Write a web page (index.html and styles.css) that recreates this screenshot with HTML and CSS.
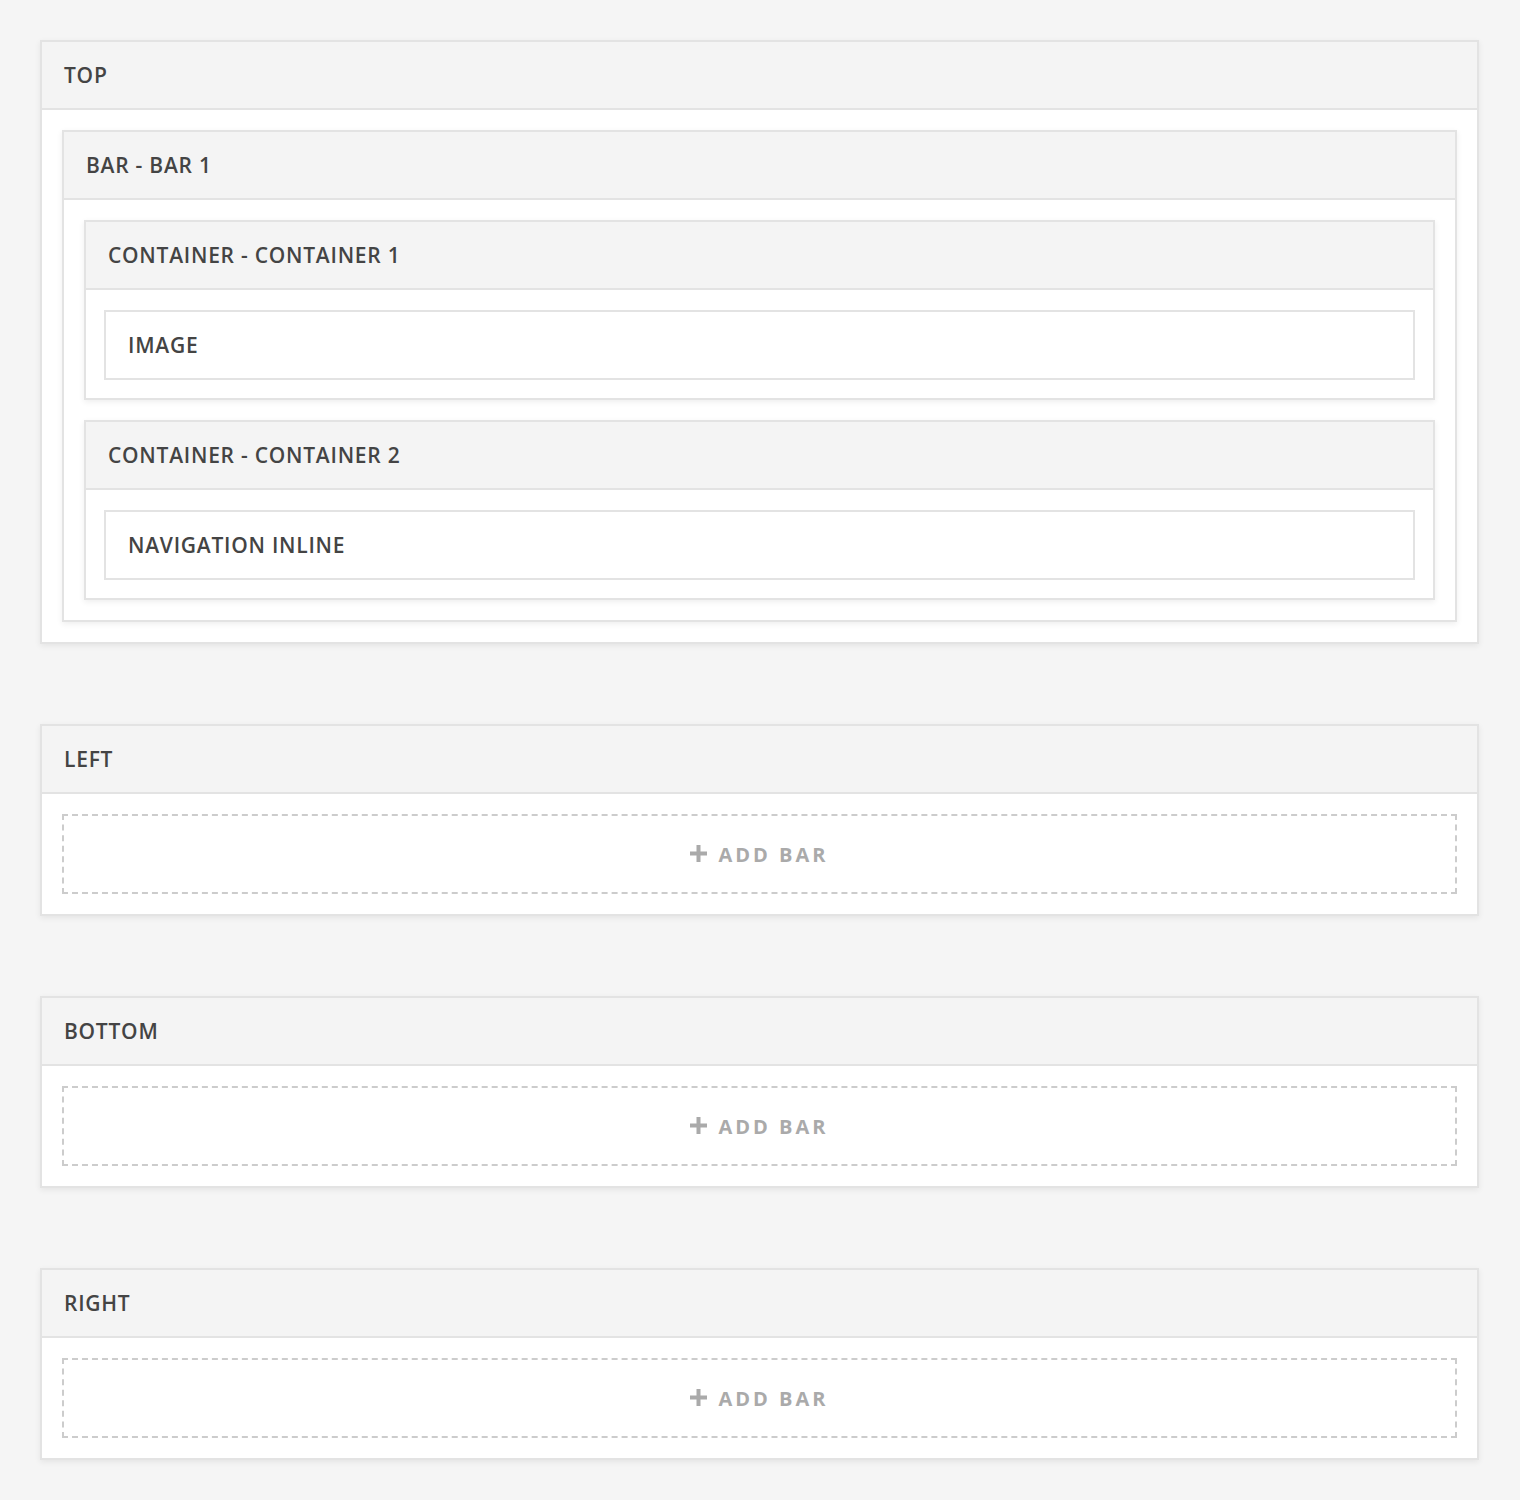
FILE: index.html
```html
<!DOCTYPE html>
<html lang="en">
<head>
    <meta charset="UTF-8">
    <title>Layout</title>
    <link rel="stylesheet" href="styles.css">
</head>
<body>
    <div class="area">
        <div class="panel">
            <div class="panel-head">Top</div>
            <div class="panel-body">
                <div class="panel">
                    <div class="panel-head">Bar - Bar 1</div>
                    <div class="panel-body">
                        <div class="panel">
                            <div class="panel-head">Container - Container 1</div>
                            <div class="panel-body tight">
                                <div class="item">Image</div>
                            </div>
                        </div>
                        <div class="panel">
                            <div class="panel-head">Container - Container 2</div>
                            <div class="panel-body tight">
                                <div class="item">Navigation Inline</div>
                            </div>
                        </div>
                    </div>
                </div>
            </div>
        </div>

        <div class="panel">
            <div class="panel-head">Left</div>
            <div class="panel-body">
                <button class="add-bar">
                    <svg class="plus" width="17" height="17" viewBox="0 0 17 17"><path d="M8.5 0v17M0 8.5h17" stroke="#aaa" stroke-width="4"/></svg>
                    Add Bar
                </button>
            </div>
        </div>

        <div class="panel">
            <div class="panel-head">Bottom</div>
            <div class="panel-body">
                <button class="add-bar">
                    <svg class="plus" width="17" height="17" viewBox="0 0 17 17"><path d="M8.5 0v17M0 8.5h17" stroke="#aaa" stroke-width="4"/></svg>
                    Add Bar
                </button>
            </div>
        </div>

        <div class="panel">
            <div class="panel-head">Right</div>
            <div class="panel-body">
                <button class="add-bar">
                    <svg class="plus" width="17" height="17" viewBox="0 0 17 17"><path d="M8.5 0v17M0 8.5h17" stroke="#aaa" stroke-width="4"/></svg>
                    Add Bar
                </button>
            </div>
        </div>
    </div>
</body>
</html>
```

FILE: styles.css
```css
body {
    margin: 0;
    padding: 0;
    background-color: #f5f5f5;
    font-family: 'Open Sans', sans-serif;
    color: #444;
}

.area {
    display: flex;
    flex-direction: column;
    gap: 80px;
    padding: 40px 41px 40px 40px;
}

.panel {
    background-color: #fff;
    border: 2px solid #e3e3e3;
    box-shadow: 0 2px 6px rgba(0, 0, 0, 0.07);
}

.panel-head {
    background-color: #f4f4f4;
    border-bottom: 2px solid #e3e3e3;
    height: 66px;
    padding: 0 22px;
    display: flex;
    align-items: center;
    font-size: 21px;
    font-weight: 600;
    letter-spacing: 0.75px;
    text-transform: uppercase;
}

.panel-body {
    padding: 20px;
    display: flex;
    flex-direction: column;
    gap: 20px;
}

.panel-body.tight {
    padding: 20px 18px 18px;
}

.item {
    border: 2px solid #e3e3e3;
    height: 66px;
    padding: 0 22px;
    display: flex;
    align-items: center;
    font-size: 21px;
    font-weight: 600;
    letter-spacing: 0.75px;
    text-transform: uppercase;
}

/* Add bar buttons */
.add-bar {
    height: 80px;
    border: 2px dashed #cccccc;
    background-color: #fff;
    color: #aaa;
    font-family: 'Open Sans', sans-serif;
    font-size: 20px;
    font-weight: 700;
    letter-spacing: 3px;
    text-transform: uppercase;
    cursor: pointer;
    display: flex;
    align-items: center;
    justify-content: center;
}

.add-bar .plus {
    margin-right: 11px;
    margin-top: -2px;
}
```
